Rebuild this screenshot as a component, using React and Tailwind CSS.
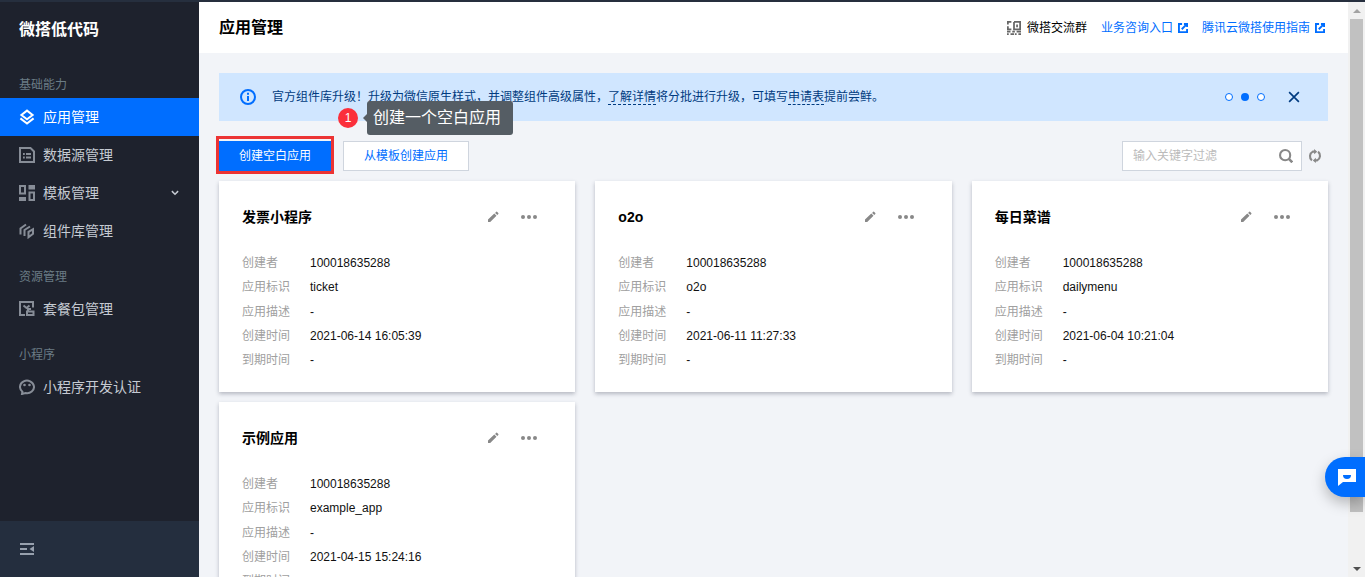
const apps = [
  { name: "发票小程序", owner: "100018635288", key: "ticket", desc: "-", created: "2021-06-14 16:05:39", expires: "-" },
  { name: "o2o", owner: "100018635288", key: "o2o", desc: "-", created: "2021-06-11 11:27:33", expires: "-" },
  { name: "每日菜谱", owner: "100018635288", key: "dailymenu", desc: "-", created: "2021-06-04 10:21:04", expires: "-" },
  { name: "示例应用", owner: "100018635288", key: "example_app", desc: "-", created: "2021-04-15 15:24:16", expires: "-" },
];

const fields = [
  ["创建者", "owner"],
  ["应用标识", "key"],
  ["应用描述", "desc"],
  ["创建时间", "created"],
  ["到期时间", "expires"],
];

const Icon = ({ className = "size-4", children }) => (
  <svg
    viewBox="0 0 16 16"
    className={`shrink-0 ${className}`}
    fill="none"
    stroke="currentColor"
    strokeWidth="2"
    aria-hidden="true"
  >
    {children}
  </svg>
);

const LayersIcon = () => (
  <Icon>
    <path d="M8 1.6 13.6 6 8 10.2 2.4 6Z" />
    <path d="M1.4 9.4 8 14.6l6.6-5.2" />
  </Icon>
);

const DataIcon = () => (
  <Icon>
    <path d="M1 1h10.500L15 4.500V15H1Z" />
    <path d="M4 7h1.800M7 7h5M4 10.500h1.800M7 10.500h5" />
  </Icon>
);

const TemplateIcon = () => (
  <Icon>
    <path d="M1 1h5v7.500H1ZM10.500 7.500H15V15h-4.500Z" />
    <path d="M9.500 0H16v4.500H9.500ZM0 12h7v4H0Z" fill="currentColor" stroke="none" />
  </Icon>
);

const ComponentIcon = () => (
  <Icon>
    <path d="M1.500 11.500V5.500L7 1.500M5.500 13V7L11 3.500" />
    <path d="M9.500 14.200V8.800l4.500-2.500v4.400Z" />
  </Icon>
);

const PackageIcon = () => (
  <Icon>
    <path d="M6 14H1V1h13v5.500" />
    <path d="M4.500 4.500 7.500 7l3-2.500" />
    <path d="M8 10.500h6.500V14H8ZM9 10V8h3" />
  </Icon>
);

const MiniAppIcon = () => (
  <Icon>
    <path d="M3.400 12.700A7 6.300 0 1 1 6.500 14.100L3 15Z" />
    <circle cx="5.500" cy="6" r="1.300" fill="currentColor" stroke="none" />
    <circle cx="10.500" cy="6" r="1.300" fill="currentColor" stroke="none" />
  </Icon>
);

const ExternalIcon = () => (
  <Icon className="size-[10px]">
    <path d="M6.500 1.500h-5v13h13v-5" strokeWidth="3" />
    <path d="M9.500 1.500h5v5M14.500 1.500 6 10" strokeWidth="3" />
  </Icon>
);

const QrIcon = () => (
  <Icon className="size-[14px] text-[#666]">
    <path d="M5 1H1v3M1 6v3.500h4M8 1h7v8.500H8V1M11.500 4v3M0 12h4M6 12h3M11 12h5M1 14v2M4 15h4M10 14v2M13 15h3" />
  </Icon>
);

const menu = [
  {
    title: "基础能力",
    items: [
      { label: "应用管理", icon: LayersIcon, active: true },
      { label: "数据源管理", icon: DataIcon },
      { label: "模板管理", icon: TemplateIcon, expandable: true },
      { label: "组件库管理", icon: ComponentIcon },
    ],
  },
  { title: "资源管理", items: [{ label: "套餐包管理", icon: PackageIcon }] },
  { title: "小程序", items: [{ label: "小程序开发认证", icon: MiniAppIcon }] },
];

const Sidebar = () => (
  <aside className="flex w-[199px] shrink-0 flex-col bg-[#1e222d]">
    <h2 className="flex h-14 items-center px-[19px] text-base font-bold text-white">微搭低代码</h2>
    <nav className="flex-1">
      {menu.map((group) => (
        <section key={group.title}>
          <h3 className="flex h-10 items-center px-[19px] pt-[14px] text-xs text-[#6b7c85]">{group.title}</h3>
          {group.items.map(({ label, icon: ItemIcon, active, expandable }) => (
            <a
              key={label}
              href="#"
              className={`flex h-[38px] items-center gap-2 px-[19px] text-sm ${
                active ? "bg-[#006eff] text-white" : "text-[#c5cad2]"
              }`}
            >
              <span className={active ? "text-white" : "text-[#878d97]"}>
                <ItemIcon />
              </span>
              <span className="flex-1">{label}</span>
              {expandable && (
                <Icon className="size-[10px] text-[#c5cad2]">
                  <path d="m3 5 5 5 5-5" strokeWidth="2.400" />
                </Icon>
              )}
            </a>
          ))}
        </section>
      ))}
    </nav>
    <div className="flex h-14 items-center bg-[#242e3e] px-[19px]">
      <button type="button" aria-label="收起菜单" className="text-[#97a0ad]">
        <Icon>
          <path d="M1 3h14M1 8h7M1 13h14" />
          <path d="M15 5v6l-4.500-3Z" fill="currentColor" stroke="none" />
        </Icon>
      </button>
    </div>
  </aside>
);

const Header = () => (
  <header className="flex h-[51px] shrink-0 items-center justify-between bg-white pr-[23px] pl-5">
    <h1 className="text-base font-bold text-black">应用管理</h1>
    <div className="flex items-center gap-[14px] text-xs">
      <span className="flex items-center gap-[6px] text-black">
        <QrIcon />
        微搭交流群
      </span>
      <a href="#" className="flex items-center gap-[5px] text-[#006eff]">
        业务咨询入口
        <ExternalIcon />
      </a>
      <a href="#" className="flex items-center gap-[5px] text-[#006eff]">
        腾讯云微搭使用指南
        <ExternalIcon />
      </a>
    </div>
  </header>
);

const Notice = () => (
  <div className="flex h-12 items-center bg-[#d0e6ff] pr-7 pl-5 text-xs text-[#003b80]">
    <Icon className="mr-4 ml-px size-4 text-[#006eff]">
      <circle cx="8" cy="8" r="7" />
      <path d="M8 3.800v2M8 7v5" />
    </Icon>
    <p className="flex-1">
      官方组件库升级！升级为微信原生样式，并调整组件高级属性，
      <a href="#" className="border-b border-dashed border-[#003b80]">了解详情</a>
      将分批进行升级，可填写
      <a href="#" className="border-b border-dashed border-[#003b80]">申请表</a>
      提前尝鲜。
    </p>
    <div className="mr-[23px] flex gap-2">
      <button type="button" aria-label="第1条" className="size-2 rounded-full border border-[#006eff] bg-white" />
      <button type="button" aria-label="第2条" className="size-2 rounded-full bg-[#006eff]" />
      <button type="button" aria-label="第3条" className="size-2 rounded-full border border-[#006eff] bg-white" />
    </div>
    <button type="button" aria-label="关闭">
      <Icon className="size-3">
        <path d="m1.500 1.500 13 13m0-13-13 13" strokeWidth="2.200" />
      </Icon>
    </button>
  </div>
);

const Toolbar = () => (
  <div className="mt-5 flex items-center justify-between">
    <div className="flex gap-3">
      <div className="relative">
        <button type="button" className="h-[30px] bg-[#006eff] px-5 text-xs text-white">
          创建空白应用
        </button>
        {/* guide step: frame around the button plus the numbered hint */}
        <span className="pointer-events-none absolute -inset-x-[3px] -top-[5px] -bottom-[3px] border-3 border-[#ec3434]" />
        <div className="absolute -top-10 left-[119px] flex items-center whitespace-nowrap">
          <span className="flex size-5 items-center justify-center rounded-full bg-[#fb2f3b] text-xs text-white">1</span>
          <span className="ml-[5px] border-y-4 border-r-4 border-y-transparent border-r-[#555d64]" />
          <span className="flex h-[34px] items-center rounded-[3px] bg-[#555d64] pr-3 pl-[6px] text-base text-white">
            创建一个空白应用
          </span>
        </div>
      </div>
      <button type="button" className="h-[30px] border border-[#cfd5de] bg-white px-5 text-xs text-[#006eff]">
        从模板创建应用
      </button>
    </div>
    <div className="flex items-center gap-[6px] pr-[6px]">
      <label className="flex h-[30px] w-[180px] items-center border border-[#cfd5de] bg-white pr-2 pl-[10px]">
        <input
          type="text"
          aria-label="输入关键字过滤"
          placeholder="输入关键字过滤"
          className="min-w-0 flex-1 text-xs outline-none placeholder:text-[#bbb]"
        />
        <Icon className="size-[14px] text-[#888]">
          <circle cx="7" cy="7" r="5.800" strokeWidth="2.400" />
          <path d="m11 11 4.200 4.200" strokeWidth="3" />
        </Icon>
      </label>
      <button type="button" aria-label="刷新" className="text-[#888]">
        <Icon className="size-[14px]">
          <path d="M4.500 13A6 6 0 0 1 5.500 3H8M11.500 3a6 6 0 0 1-1 10H8" strokeWidth="2.400" />
          <path d="M7 0v6l3.500-3ZM9 10v6l-3.500-3Z" fill="currentColor" stroke="none" />
        </Icon>
      </button>
    </div>
  </div>
);

const AppCard = ({ app }) => (
  <article className="bg-white px-[23px] pt-6 pb-5 shadow-[0_2px_4px_rgba(54,58,80,0.32)]">
    <div className="flex h-6 items-center">
      <h2 className="flex-1 text-sm font-bold text-black">{app.name}</h2>
      <div className="mr-[14px] flex items-center gap-[21px] text-[#888]">
        <button type="button" aria-label="编辑">
          <svg viewBox="0 0 12 12" className="size-3" fill="currentColor" aria-hidden="true">
            <path d="M1 11V8.500L7.300 2.600 9.500 4.800 3.200 11ZM8.100 1.900 9.200.8q.4-.4.800 0L11.300 2.100q.4.400 0 .8L10.300 4Z" />
          </svg>
        </button>
        <button type="button" aria-label="更多">
          <svg viewBox="0 0 18 12" className="h-3 w-[18px]" fill="currentColor" aria-hidden="true">
            <circle cx="3" cy="6" r="2" />
            <circle cx="9" cy="6" r="2" />
            <circle cx="15" cy="6" r="2" />
          </svg>
        </button>
      </div>
    </div>
    <dl className="mt-[22px] flex h-[121px] flex-col justify-between text-xs leading-6">
      {fields.map(([label, key]) => (
        <div key={key} className="flex h-6">
          <dt className="w-[68px] text-[#a0a0a0]">{label}</dt>
          <dd className="text-[#111]">{app[key]}</dd>
        </div>
      ))}
    </dl>
  </article>
);

const Scrollbar = () => (
  <div className="flex w-[17px] shrink-0 flex-col items-center bg-[#f1f1f1]" aria-hidden="true">
    <span className="flex h-[17px] items-center">
      <span className="border-x-4 border-b-4 border-x-transparent border-b-[#a3a3a3]" />
    </span>
    <span className="w-[13px] grow-[493] bg-[#c1c1c1]" />
    <span className="grow-[48]" />
    <span className="flex h-[17px] items-center">
      <span className="border-x-4 border-t-4 border-x-transparent border-t-[#505050]" />
    </span>
  </div>
);

export default function App() {
  return (
    <div className="flex h-screen overflow-hidden border-t-2 border-[#262f3e] bg-[#f2f4f8] font-['Liberation_Sans','Noto_Sans_CJK_SC',sans-serif]">
      <Sidebar />
      <div className="flex min-w-0 flex-1 flex-col">
        <Header />
        <main className="min-h-0 flex-1 overflow-hidden p-5">
          <Notice />
          <Toolbar />
          <div className="mt-[10px] grid grid-cols-3 gap-x-5 gap-y-[10px]">
            {apps.map((app) => (
              <AppCard key={app.key} app={app} />
            ))}
          </div>
        </main>
      </div>
      <Scrollbar />
      <button
        type="button"
        aria-label="在线客服"
        className="fixed right-0 bottom-20 flex h-10 w-10 items-center rounded-l-full bg-[#006eff] pl-[13px] text-white shadow-[0_6px_14px_rgba(0,0,0,0.25)]"
      >
        <svg viewBox="0 0 18 18" className="size-[18px]" aria-hidden="true">
          <path d="M0 1h18v13H5l-5 4Z" fill="currentColor" />
          <path d="M5 7h8q0 4-4 4T5 7Z" fill="#006eff" />
        </svg>
      </button>
    </div>
  );
}
